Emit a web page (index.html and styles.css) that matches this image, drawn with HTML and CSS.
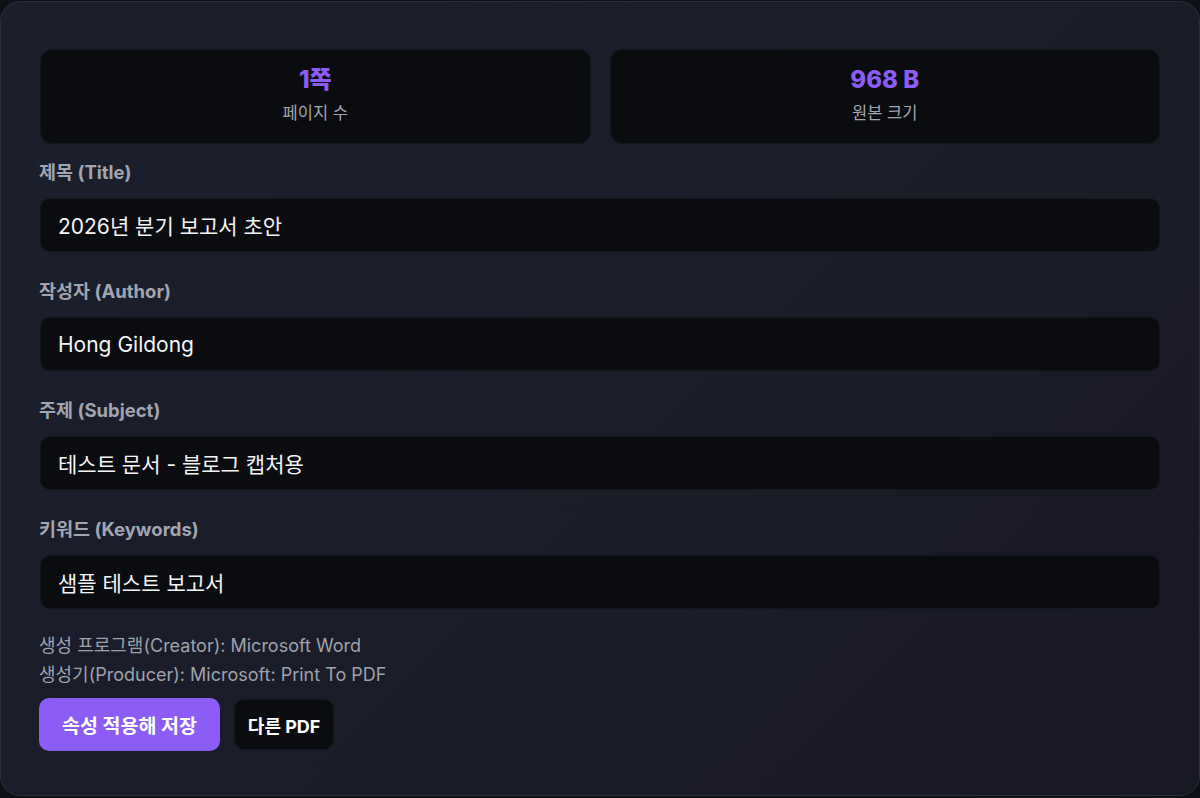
FILE: index.html
```html
<!DOCTYPE html>
<html lang="ko">
<head>
  <meta charset="UTF-8" />
  <title>PDF 속성 편집</title>
  <link rel="stylesheet" href="styles.css">
</head>
<body>

  <div class="panel">
    <div class="stats">
      <div class="stat">
        <div class="stat-value">1쪽</div>
        <div class="stat-label">페이지 수</div>
      </div>
      <div class="stat">
        <div class="stat-value">968 B</div>
        <div class="stat-label">원본 크기</div>
      </div>
    </div>

    <div class="field">
      <label for="title">제목 (Title)</label>
      <input type="text" id="title" value="2026년 분기 보고서 초안" />
    </div>

    <div class="field">
      <label for="author">작성자 (Author)</label>
      <input type="text" id="author" value="Hong Gildong" />
    </div>

    <div class="field">
      <label for="subject">주제 (Subject)</label>
      <input type="text" id="subject" value="테스트 문서 - 블로그 캡처용" />
    </div>

    <div class="field">
      <label for="keywords">키워드 (Keywords)</label>
      <input type="text" id="keywords" value="샘플 테스트 보고서" />
    </div>

    <div class="meta">
      <div>생성 프로그램(Creator): Microsoft Word</div>
      <div>생성기(Producer): Microsoft: Print To PDF</div>
    </div>

    <div class="actions">
      <button class="btn-primary">속성 적용해 저장</button>
      <button class="btn-secondary">다른 PDF</button>
    </div>
  </div>

</body>
</html>
```

FILE: styles.css
```css
body {
  margin: 0;
  background: #0f1016;
  font-family: Inter, "Noto Sans CJK KR", sans-serif;
  color: #e5e7eb;
}

.panel {
  box-sizing: border-box;
  height: 795px;
  margin-top: 1px;
  padding: 47px 39px 0 38px;
  border: 1px solid #2a2d3a;
  border-radius: 20px;
  background: linear-gradient(135deg, #1b1f2c 0%, #1a1c28 55%, #181824 100%);
}

.stats {
  display: grid;
  grid-template-columns: 1fr 1fr;
  gap: 19px;
  margin: 0 0 16px 1px;
}

.stat {
  height: 95px;
  box-sizing: border-box;
  padding-top: 15px;
  background: #0b0c10;
  border: 1px solid #14161d;
  border-radius: 12px;
  text-align: center;
}

.stat-value {
  font-size: 24px;
  font-weight: 800;
  line-height: 30px;
  color: #8b5cf6;
}

.stat-label {
  margin-top: 7px;
  font-size: 16.5px;
  line-height: 22px;
  color: #a3a6b0;
}

.field {
  margin: 0 0 27px 1px;
}

.field label {
  display: block;
  font-size: 18.5px;
  font-weight: 700;
  line-height: 24px;
  color: #a1a5b1;
  margin: 0 0 14px -1px;
}

.field input {
  display: block;
  box-sizing: border-box;
  width: 100%;
  height: 54px;
  padding: 0 17px;
  font-family: inherit;
  font-size: 21px;
  color: #f4f4f6;
  background: #0b0c10;
  border: 1px solid #14161d;
  border-radius: 10px;
  outline: none;
}

.meta {
  margin-top: -5px;
  font-size: 18px;
  line-height: 29px;
  color: #9ea2ad;
}

.actions {
  display: flex;
  align-items: center;
  gap: 14px;
  margin-top: 9px;
}

button {
  font-family: inherit;
  border: none;
  cursor: pointer;
}

.btn-primary {
  height: 53px;
  padding: 0 23px;
  font-size: 19.5px;
  font-weight: 700;
  color: #fff;
  background: #8b5cf6;
  border-radius: 10px;
}

.btn-secondary {
  height: 51px;
  padding: 0 13px;
  font-size: 18px;
  font-weight: 700;
  color: #fff;
  background: #0b0c10;
  border: 1px solid #15171e;
  border-radius: 10px;
}
```
